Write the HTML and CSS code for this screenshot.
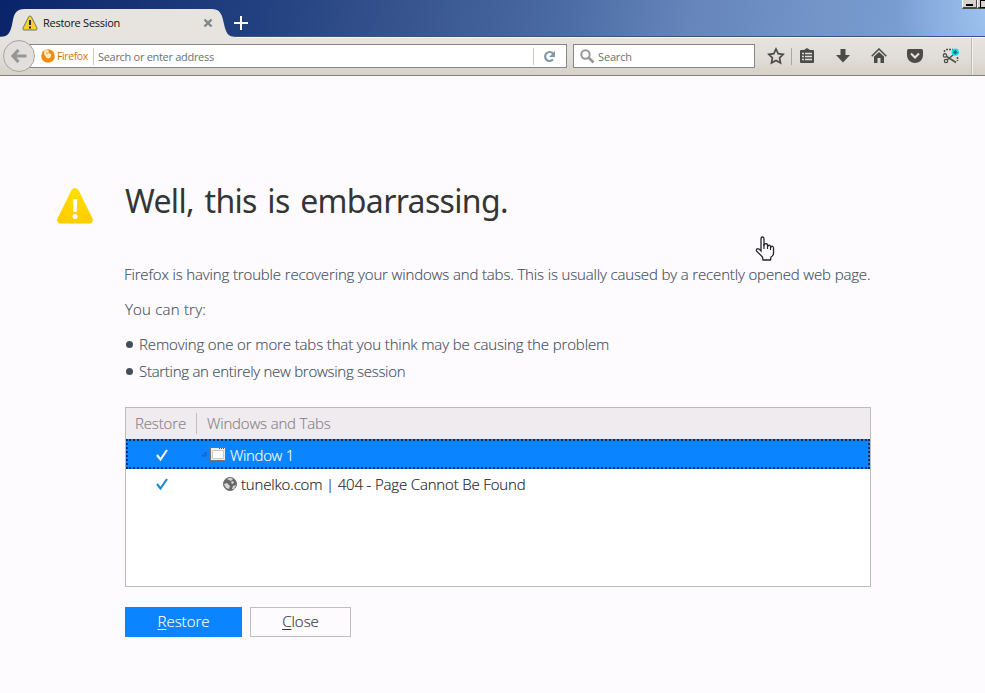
FILE: index.html
```
<!DOCTYPE html>
<html lang="en">
<head>
<meta charset="utf-8">
<title>Restore Session</title>
<link rel="stylesheet" href="styles.css">
</head>
<body>
<header class="titlebar">
  <div class="tab">
    <svg class="tab-shape" width="240" height="29" viewBox="0 0 240 29"><path d="M0 28C8 28 10 24 12 16C14 5 15 0 25 0H211C221 0 222 6 224 15C226 24 228 28 236 28V29H0Z" fill="#e7e4df"/></svg>
    <svg class="tab-icon" width="16" height="16" viewBox="0 0 16 16"><path d="M8 1Q9 1 9.500 2L15 13Q15.500 15 14 15H2Q.5 15 1 13L6.500 2Q7 1 8 1Z" fill="#f4d323" stroke="#77776b"/><path d="M8 5v5M8 11.500v2" stroke="#222" stroke-width="2"/></svg>
    <span class="tab-title">Restore Session</span>
    <svg class="tab-close" width="10" height="10" viewBox="0 0 10 10"><path d="M1.500 1.500l7 7M8.500 1.500l-7 7" stroke="#7d8588" stroke-width="2.400"/></svg>
  </div>
  <svg class="plus" width="14" height="14" viewBox="0 0 14 14"><path d="M7 0v14M0 7h14" stroke="#fff" stroke-width="2"/></svg>
  <div class="window-buttons"><i class="min"></i><i class="max"></i></div>
</header>
<nav class="toolbar">
  <div class="back"><svg width="16" height="14" viewBox="0 0 16 14"><path d="M7.500 1L2 7l5.500 6M2 7h13.500" fill="none" stroke="#979797" stroke-width="3.200"/></svg></div>
  <div class="urlbar">
    <svg width="14" height="14" viewBox="0 0 14 14"><circle cx="7" cy="7" r="6.800" fill="#f38b10"/><path d="M3.500 1.500Q6 .5 8 2L7 4L10 5Q10.500 9 7.500 9.500Q5 9.500 4.500 7L3 5Z" fill="#fff2ca"/><path d="M5 3l2 1-1 2Z" fill="#f6a020"/></svg>
    <span class="brand">Firefox</span>
    <span class="placeholder">Search or enter address</span>
    <span class="reload"><svg width="13" height="13" viewBox="0 0 13 13"><path d="M10 9.500A4.500 4.500 0 1 1 10 3.500" fill="none" stroke="#8197a5" stroke-width="2.200"/><path d="M12 1v6H6Z" fill="#8197a5"/></svg></span>
  </div>
  <div class="searchbar">
    <svg width="15" height="15" viewBox="0 0 15 15"><circle cx="5.500" cy="5.500" r="4.200" fill="none" stroke="#979797" stroke-width="2"/><path d="M8.500 8.500l5 5" stroke="#979797" stroke-width="2.600"/></svg>
    <span>Search</span>
  </div>
  <div class="tools">
    <svg class="star" width="18" height="18" viewBox="0 0 18 18"><path d="M9 2l2.200 4.600 5 .7-3.600 3.500.9 5L9 13.400l-4.500 2.400.9-5L1.800 7.300l5-.7Z" fill="none" stroke="#4b4b48" stroke-width="1.700"/></svg>
    <i class="divider"></i>
    <svg class="list" width="16" height="16" viewBox="0 0 16 16"><path d="M1 3Q1 2 2 2H5L8 0L11 2H14Q15 2 15 3V14Q15 15 14 15H2Q1 15 1 14Z" fill="#4b4b48"/><path d="M3 5.500H5M6 5.500H13M3 8.500H5M6 8.500H13M3 11.500H5M6 11.500H13" stroke="#e1dedb" stroke-width="1.500"/></svg>
    <svg class="down" width="16" height="16" viewBox="0 0 16 16"><path d="M5.500 1H10.500V7H15L8 14.500L1 7H5.500Z" fill="#4b4b48"/></svg>
    <svg class="home" width="16" height="16" viewBox="0 0 16 16"><path d="M.7 8.200L8 1l7.300 7.200" fill="none" stroke="#4b4b48" stroke-width="1.500"/><path d="M3 8.500L8 4L13 8.500V15H9.500V10H6.500V15H3Z" fill="#4b4b48"/></svg>
    <svg class="pocket" width="16" height="16" viewBox="0 0 16 16"><path d="M1.500 1H14.500Q16 1 16 3V7C16 12 12 15 8 15S0 12 0 7V3Q0 1 1.500 1Z" fill="#4b4b48"/><path d="M4 5.500L8 9.500L12 5.500" fill="none" stroke="#e8e5e1" stroke-width="2"/></svg>
    <svg class="scissors" width="18" height="16" viewBox="0 0 18 16"><path d="M4 1.500H11M2.500 2V6M15.500 9V13" stroke="#4b4b48" stroke-width="1.500" stroke-dasharray="2 1"/><circle cx="3" cy="7.500" r="1.700" fill="none" stroke="#4b4b48" stroke-width="1.200"/><circle cx="4" cy="13" r="1.700" fill="none" stroke="#4b4b48" stroke-width="1.200"/><path d="M4.500 8.300L14 14.500M5 12L11 7" stroke="#4b4b48" stroke-width="1.500"/><circle cx="13.200" cy="4.200" r="3.600" fill="#00e5f2"/><path d="M13.200 1.800v4.800M10.900 4.200h4.600M11.700 2.700l3 3M14.700 2.700l-3 3" stroke="#28545c" stroke-width=".9"/></svg>
    <i class="edge"></i>
  </div>
</nav>
<main>
  <section class="heading">
    <svg width="36" height="36" viewBox="0 0 36 36"><defs><linearGradient id="warning" x2="0" y2="1"><stop stop-color="#ffe000"/><stop offset="1" stop-color="#ffcb00"/></linearGradient></defs><path d="M18 0Q20.500 0 22 3L35.300 30Q37 35.500 32 35.500H4Q-1 35.500 .7 30L14 3Q15.500 0 18 0Z" fill="url(#warning)"/><path d="M16 11H20.200L19.700 24H16.500Z" fill="#fff"/><circle cx="18" cy="28.500" r="2.500" fill="#fff"/></svg>
    <h1>Well, this is embarrassing.</h1>
  </section>
  <section class="content">
    <p><span class="t-intro">Firefox is having trouble recovering your windows and tabs. This is usually caused by a recently opened web page.</span></p>
    <p><span class="t-try">You can try:</span></p>
    <ul>
      <li><span class="t-remove">Removing one or more tabs that you think may be causing the problem</span></li>
      <li><span class="t-start">Starting an entirely new browsing session</span></li>
    </ul>
    <div class="tree">
      <div class="tree-head"><span class="restore-col">Restore</span><span class="name-col">Windows and Tabs</span></div>
      <div class="tree-row selected">
        <svg class="check" width="12" height="12" viewBox="0 0 12 12"><path d="M1 6l3.500 4.500L11 1" fill="none" stroke="#fff" stroke-width="2.100"/></svg>
        <svg class="twisty" width="6" height="6" viewBox="0 0 6 6"><path d="M1 5L5 1V5Z" fill="none" stroke="#315d88"/></svg>
        <svg class="window-icon" width="16" height="14" viewBox="0 0 16 14"><path d="M.5.5h15v13H.5Z" fill="#eee" stroke="#76716b"/><path d="M2.500 3.500h11v8h-11Z" fill="#fff" stroke="#c7c7c7"/><path d="M9 1.500h5" stroke="#555" stroke-dasharray="1 1"/></svg>
        <span class="t-window">Window 1</span>
      </div>
      <div class="tree-row child">
        <svg class="check" width="12" height="12" viewBox="0 0 12 12"><path d="M1 6l3.500 4.500L11 1" fill="none" stroke="#188ad2" stroke-width="2.100"/></svg>
        <svg class="globe" width="14" height="14" viewBox="0 0 14 14"><circle cx="7" cy="7" r="6.500" fill="#666" stroke="#707070"/><path d="M4 2Q7 0 10 2L8 4L6 3ZM1 7L4 6L7 9L6 12L3 11ZM8 5L10 4L11 6L9 7ZM10 9L13 8L11 12L9 12Z" fill="#d8d8d8"/></svg>
        <span class="t-tab">tunelko.com | 404 - Page Cannot Be Found</span>
      </div>
    </div>
    <div class="actions"><button class="primary"><u>R</u>estore</button><button class="secondary"><u>C</u>lose</button></div>
  </section>
</main>
<svg class="cursor" width="20" height="26" viewBox="0 0 20 26"><path d="M6 15L6 3Q6 1 7.500 1Q9 1 9 3V9Q12 6 13 10Q15 8 16 11Q18 9 18.500 12V17Q18.500 20 16 21L15.500 24H8L7.500 21L1.500 15Q1 12 4 13Z" fill="#fff" stroke="#25252f" stroke-width="1.300"/><path d="M9 8v5M12.500 9v4M15.500 10v4" stroke="#25252f" stroke-width="1.200"/></svg>
</body>
</html>
```
FILE: styles.css
```
* { box-sizing: border-box; }
body { margin: 0; width: 985px; height: 693px; overflow: hidden; background: #fefbff; font-family: "Open Sans", sans-serif; font-size: 15px; color: #424f5a; }
svg { display: block; flex: none; }
.titlebar { position: relative; height: 37px; display: flex; padding-top: 9px; background: radial-gradient(circle at 1005px 10px, #a3c8f2 0, #a3c8f200 110px), linear-gradient(100deg, #0a246a 0, #22407f 26%, #38558f 42%, #4b6ba5 57%, #6585bb 70%, #7496c9 84%, #7fa5db 100%); border-bottom: 1px solid #31568c; }
.tab { position: relative; width: 233px; height: 29px; display: flex; align-items: center; padding-left: 22px; flex: none; z-index: 1; }
.tab-shape { position: absolute; left: 0; top: 0; }
.tab-icon, .tab-title, .tab-close { position: relative; }
.tab-icon, .tab-close { margin-top: -1px; }
.tab-title { margin: -2px 0 0 5px; width: 160px; color: #111; font-size: 11px; letter-spacing: -.27px; }
.plus { margin: 7px 0 0 1px; }
.window-buttons { position: absolute; left: 962px; top: 0; width: 23px; height: 9px; display: flex; overflow: hidden; }
.window-buttons i { flex: none; width: 15px; height: 9px; background: #d7d2cb; border: solid #4a4a4a; border-width: 0 1px 2px 0; border-left: 1px solid #fff; }
.min::after { content: ""; display: block; width: 7px; height: 2px; margin: 4px 0 0 3px; background: #000; }
.max::after { content: ""; display: block; width: 9px; height: 6px; margin: 0 0 0 2px; border: 1px solid #000; }
.toolbar { height: 39px; display: flex; align-items: flex-start; background: linear-gradient(#e7e4df, #e1ddd9 50%, #d6d1c7); border-top: 1px solid #f8f6f5; border-bottom: 1px solid #817f7e; }
.back { position: relative; z-index: 2; flex: none; width: 32px; height: 32px; margin: 2px 0 0 3px; border: 1px solid #a7a4a1; border-radius: 50%; background: #e1dedb; display: grid; place-items: center; }
.urlbar { width: 538px; height: 24px; flex: none; margin: 6px 0 0 -6px; padding-left: 11px; display: flex; align-items: center; background: #fff; border: 1px solid #85858a; font-size: 11px; color: #6d7072; }
.brand { width: 37px; margin-left: 2px; color: #d8720c; font-size: 10.500px; height: 17px; line-height: 17px; border-right: 1px solid #cfcec4; white-space: nowrap; letter-spacing: -.4px; }
.placeholder { margin-left: 4px; letter-spacing: -.3px; }
.reload { width: 33px; height: 17px; margin-left: auto; border-left: 1px solid #cfcec4; display: grid; place-items: center; }
.reload svg { margin-right: 2px; }
.searchbar { width: 182px; height: 24px; flex: none; margin: 6px 0 0 6px; padding-left: 6px; display: flex; align-items: center; gap: 3px; border: 1px solid #85858a; background: #fff; font-size: 11px; color: #6d7072; letter-spacing: -.15px; }
.tools { display: flex; align-items: center; height: 37px; margin-left: 12px; }
.divider { width: 1px; height: 17px; margin: 0 7px 0 6px; background: #aaa7a5; }
.down, .home, .pocket { margin-left: 20px; }
.tools svg { margin-top: -1px; }
.scissors { margin-left: 19px; }
.edge { width: 2px; height: 37px; margin-left: 11px; border-left: 1px solid #bfbab3; border-right: 1px solid #f3f0ec; }
main { padding: 101px 114px 0 58px; }
.heading { display: flex; align-items: center; height: 47px; }
.heading svg { margin: 10px 0 0 -1px; }
h1 { margin: 0 0 0 32px; font-size: 32px; font-weight: 400; line-height: 44px; letter-spacing: -.66px; word-spacing: 2.900px; color: #333634; font-family: "Noto Sans", sans-serif; white-space: nowrap; }
.content { padding-left: 67px; font-weight: 300; white-space: nowrap; -webkit-text-stroke: .15px currentColor; }
p { margin: 0; height: 35px; line-height: 24px; }
.content > p:first-child { margin-top: 38px; }
.t-intro { letter-spacing: -.147px; margin-left: -1px; }
.t-try { letter-spacing: .2px; }
.t-remove { letter-spacing: -.13px; }
.t-start { letter-spacing: -.28px; }
ul { margin: 0; padding: 0; list-style: none; }
li { height: 27px; line-height: 24px; display: flex; align-items: flex-start; }
li::before { content: ""; width: 7px; height: 7px; margin: 9px 6px 0 1px; border-radius: 50%; background: #424f5a; }
.tree { width: 746px; height: 180px; margin-top: 21px; border: 1px solid #b8bfb9; background: #fff; }
.tree-head { height: 31px; display: flex; align-items: center; background: #f0ebee; color: #858186; }
.restore-col { width: 71px; padding-left: 9px; height: 21px; line-height: 21px; border-right: 1px solid #bbbfbd; letter-spacing: -.15px; }
.name-col { padding-left: 10px; line-height: 21px; letter-spacing: -.18px; }
.tree-row { height: 30px; display: flex; align-items: center; color: #222; }
.selected { background: #0a84ff; border: 2px dotted #082f64; color: #fff; }
.check { margin-left: 30px; }
.selected .check { margin-left: 28px; margin-top: 2px; }
.twisty { margin-left: 33px; }
.window-icon { margin-left: 3px; }
.t-window { margin: 2px 0 0 4px; letter-spacing: -.35px; }
.globe { margin-left: 55px; }
.t-tab { margin-left: 4px; letter-spacing: -.17px; }
.actions { display: flex; gap: 8px; margin-top: 20px; }
button { height: 30px; padding: 0 0 2px; font: inherit; line-height: 26px; -webkit-text-stroke: inherit; }
u { text-decoration-thickness: 1px; text-underline-offset: 2px; }
.primary { width: 117px; color: #fff; background: #0a84ff; border: 1px solid #0a84ff; }
.secondary { width: 101px; color: #333; background: #fefbff; border: 1px solid #b9c1ba; }
.cursor { position: absolute; left: 755px; top: 236px; }
```
